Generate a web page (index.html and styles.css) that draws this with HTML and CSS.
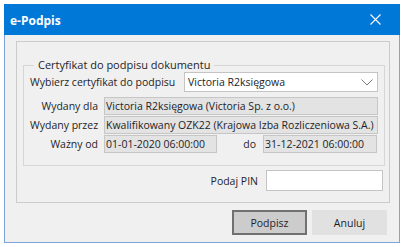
FILE: index.html
```html
<!DOCTYPE html>
<html lang="pl">
<head>
<meta charset="utf-8">
<title>e-Podpis</title>
<link rel="stylesheet" href="styles.css">
</head>
<body>
<div class="window">
  <div class="titlebar">
    <span class="title">e-Podpis</span>
    <svg class="close" width="11" height="11" viewBox="0 0 11 11"><path d="M0.5 0.5 L10.5 10.5 M10.5 0.5 L0.5 10.5" stroke="#fff" stroke-width="1.1" fill="none"/></svg>
  </div>
  <div class="content">
    <div class="panel">
      <fieldset class="group">
        <legend>Certyfikat do podpisu dokumentu</legend>
        <div class="select-row">
          <span class="label">Wybierz certyfikat do podpisu</span>
          <div class="combo">
            <span>Victoria R2księgowa</span>
            <svg width="12" height="7" viewBox="0 0 12 7"><path d="M0.5 0.5 L6 6 L11.5 0.5" stroke="#7a7a7a" stroke-width="1" fill="none"/></svg>
          </div>
        </div>
        <div class="info">
          <span class="lbl">Wydany dla</span>
          <div class="field">Victoria R2księgowa (Victoria Sp. z o.o.)</div>
          <span class="lbl">Wydany przez</span>
          <div class="field">Kwalifikowany OZK22 (Krajowa Izba Rozliczeniowa S.A.)</div>
          <span class="lbl">Ważny od</span>
          <div class="dates">
            <div class="field date1">01-01-2020 06:00:00</div>
            <span class="lbl do">do</span>
            <div class="field date2">31-12-2021 06:00:00</div>
          </div>
        </div>
      </fieldset>
      <div class="pin-row">
        <span class="label">Podaj PIN</span>
        <div class="pin-input"></div>
      </div>
    </div>
    <div class="buttons">
      <button class="btn btn-default">Podpisz</button>
      <button class="btn">Anuluj</button>
    </div>
  </div>
</div>
</body>
</html>
```
FILE: styles.css
```css
html, body {
  margin: 0;
  padding: 0;
  background: #ffffff;
}
body {
  font-family: "Open Sans", "Noto Sans", sans-serif;
  font-size: 10.5px;
  color: #1e1e28;
}
.window {
  margin: 4px 0 0 4px;
  width: 396px;
  height: 239px;
  box-sizing: border-box;
  border: 1px solid #7ea3d6;
  border-top: 0;
  background: #f0f0f0;
  display: flex;
  flex-direction: column;
}
.titlebar {
  height: 31px;
  margin: 0 -1px;
  background: #0078d7;
  display: flex;
  align-items: center;
  justify-content: space-between;
  padding: 2px 19px 0 6px;
  box-sizing: border-box;
}
.title {
  color: #fff;
  font-weight: 700;
  font-size: 12px;
}
.close {
  display: block;
  margin-top: -2px;
}
.content {
  padding: 6px 9px 0 11px;
}
.panel {
  width: 374px;
  height: 162px;
  box-sizing: border-box;
  border: 1px solid #cbcbcb;
  padding: 16px 4px 0 6px;
}
.group {
  margin: 0;
  border: 1px solid #d6d6d6;
  padding: 0 6px 12px 6px;
}
.group legend {
  margin-left: 4px;
  padding: 0 4px;
  line-height: 14px;
  font-size: 11px;
}
.select-row {
  display: flex;
  align-items: center;
  justify-content: space-between;
}
.label {
  white-space: nowrap;
}
.combo {
  width: 194px;
  height: 20px;
  box-sizing: border-box;
  border: 1px solid #c4c4c4;
  background: #fff;
  display: flex;
  align-items: center;
  justify-content: space-between;
  padding: 0 4px 0 3px;
}
.combo svg {
  display: block;
}
.info {
  margin-top: 5px;
  display: grid;
  grid-template-columns: 68px 1fr;
  column-gap: 6px;
  row-gap: 1px;
  align-items: center;
}
.lbl {
  text-align: right;
  white-space: nowrap;
}
.field {
  height: 18px;
  box-sizing: border-box;
  border: 1px solid #c6c6c6;
  background: #e3e3e3;
  padding: 0 1px;
  line-height: 17px;
  white-space: nowrap;
  overflow: hidden;
}
.dates {
  display: flex;
  align-items: center;
}
.date1 {
  width: 113px;
}
.do {
  width: 39px;
  margin-right: 7px;
}
.date2 {
  width: 114px;
}
.pin-row {
  margin-top: 4px;
  display: flex;
  align-items: center;
  justify-content: flex-end;
  gap: 8px;
  padding-right: 2px;
}
.pin-input {
  width: 117px;
  height: 21px;
  box-sizing: border-box;
  border: 1px solid #c4c4c4;
  background: #fff;
}
.buttons {
  margin-top: 7px;
  margin-right: 3px;
  display: flex;
  justify-content: flex-end;
  gap: 5px;
}
.btn {
  width: 75px;
  height: 25px;
  box-sizing: border-box;
  border: 1px solid #e1e1e1;
  background: #e1e1e1;
  font-family: "Open Sans", "Noto Sans", sans-serif;
  font-size: 10.5px;
  color: #1e1e28;
  padding: 0;
}
.btn-default {
  border: 2px solid #707070;
  background: #cccccc;
}
```
